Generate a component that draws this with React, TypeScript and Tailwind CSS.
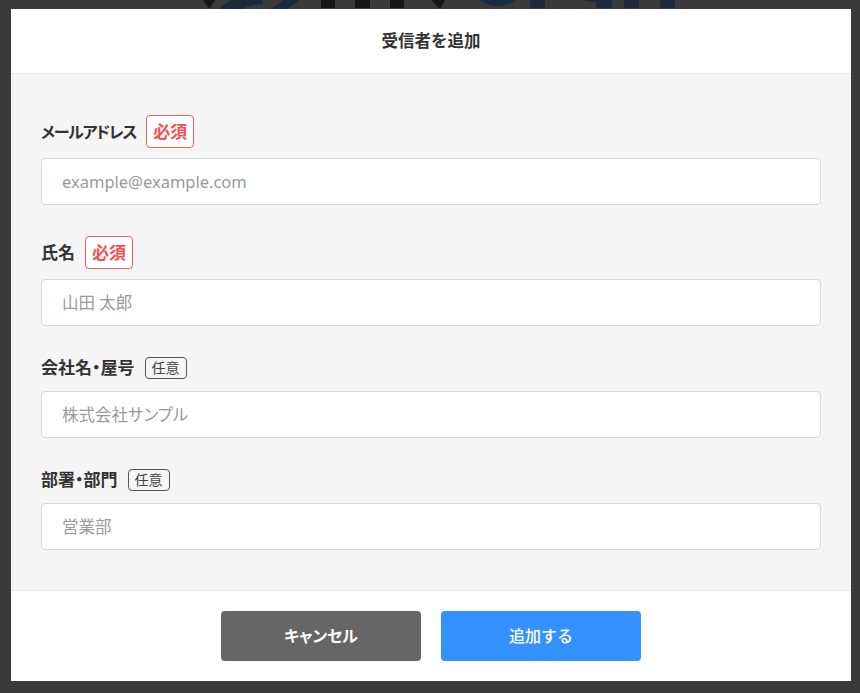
import React from "react";

const font = "font-['Noto_Sans','Noto_Sans_CJK_JP',sans-serif]";

function Required() {
  return (
    <span className="flex h-[33px] w-[48px] items-center justify-center rounded-[4px] border border-[#f06060] bg-white text-[17px] font-bold text-[#f05252]">
      必須
    </span>
  );
}

function Optional() {
  return (
    <span className="flex h-[22px] w-[42px] items-center justify-center rounded-[4px] border border-[#555] text-[14px] leading-none text-[#444]">
      任意
    </span>
  );
}

function Field({
  label,
  required,
  placeholder,
  tight,
}: {
  label: string;
  required?: boolean;
  placeholder: string;
  tight?: boolean;
}) {
  return (
    <div className="flex flex-col">
      <div className={`flex items-center gap-[10px] ${required ? "mb-[10px] h-[33px]" : "mb-[12px] h-[22px]"}`}>
        <span
          className={`font-bold text-[#333] [font-feature-settings:'palt'] ${tight ? "text-[16px] tracking-[-0.08em]" : "text-[17px]"}`}
        >
          {label}
        </span>
        {required ? <Required /> : <Optional />}
      </div>
      <input
        className="h-[47px] w-full rounded-[4px] border border-[#d6d6de] bg-white px-[20px] text-[16.5px] text-[#333] outline-none placeholder:text-[#999999] [font-feature-settings:'palt']"
        placeholder={placeholder}
      />
    </div>
  );
}

export default function App() {
  return (
    <div className={`relative h-[693px] w-full overflow-hidden bg-[#3a3a3a] ${font}`}>
      <svg className="absolute left-0 top-0" width="860" height="20" viewBox="0 0 860 20">
        <polygon points="203,0 215,0 209,9" fill="#161616" />
        <path d="M224 12 Q240 0 262 -2" stroke="#1a2b3e" strokeWidth="12" fill="none" />
        <path d="M270 9 L290 -4 L300 0 L282 12 Z" fill="#1a2b3e" />
        <rect x="321" y="0" width="14" height="8" fill="#161616" />
        <rect x="355" y="0" width="15" height="8" fill="#161616" />
        <rect x="390" y="0" width="14" height="8" fill="#161616" />
        <polygon points="431,0 445,0 440,9" fill="#161616" />
        <path d="M475 -10 A23 16 0 0 0 521 -10 Z" fill="#1a2b3e" />
        <rect x="530" y="0" width="15" height="8" fill="#1a2b3e" />
        <path d="M574 -8 A20 14 0 0 0 612 -8 L600 -8 A10 8 0 0 1 586 -8 Z" fill="#1a2b3e" />
        <rect x="596" y="0" width="16" height="8" fill="#1a2b3e" />
        <rect x="624" y="0" width="15" height="8" fill="#1a2b3e" />
        <rect x="660" y="0" width="15" height="8" fill="#1a2b3e" />
      </svg>

      <div className="relative ml-[11px] mt-[9px] flex h-[672px] w-[840px] flex-col bg-white">
        <div className="flex h-[65px] items-center justify-center border-b border-[#e6e6e6]">
          <h2 className="text-[16.5px] font-bold text-[#333]">受信者を追加</h2>
        </div>
        <div className="flex flex-1 flex-col gap-[31px] bg-[#f5f5f5] px-[30px] pt-[41px]">
          <Field label="メールアドレス" required tight placeholder="example@example.com" />
          <Field label="氏名" required placeholder="山田 太郎" />
          <Field label="会社名・屋号" placeholder="株式会社サンプル" />
          <Field label="部署・部門" placeholder="営業部" />
        </div>
        <div className="flex h-[91px] items-center justify-center gap-[20px] border-t border-[#e6e6ea] bg-white">
          <button className="h-[50px] w-[200px] rounded-[4px] bg-[#666666] text-[16px] font-bold text-white [font-feature-settings:'palt']">
            キャンセル
          </button>
          <button className="h-[50px] w-[200px] rounded-[4px] bg-[#3491ff] text-[16px] font-medium text-white">
            追加する
          </button>
        </div>
      </div>
    </div>
  );
}
